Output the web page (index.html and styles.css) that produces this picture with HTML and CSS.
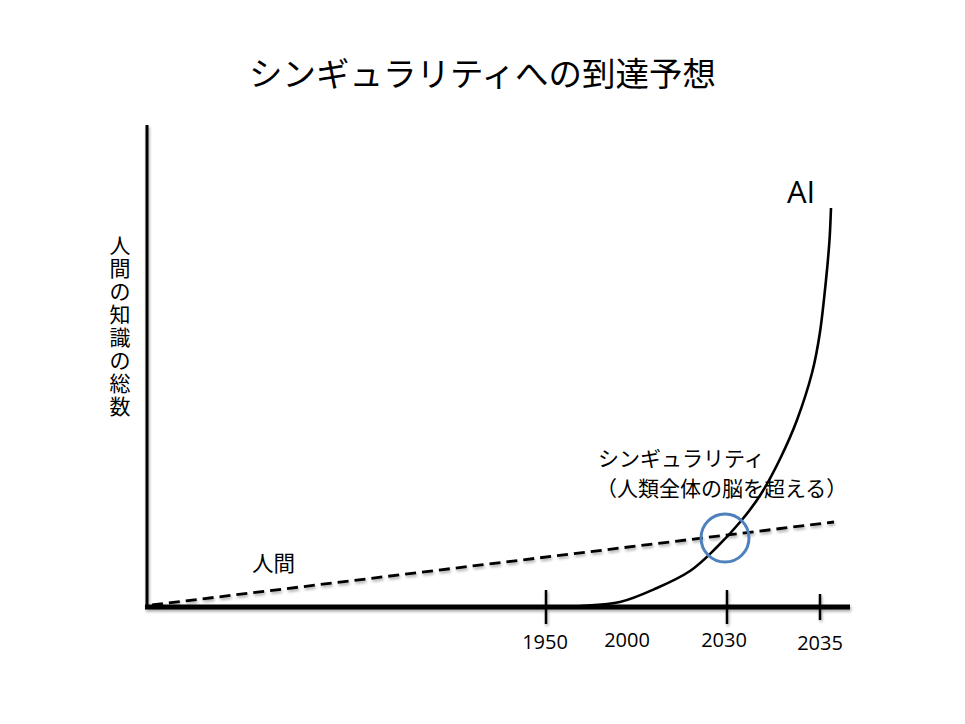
FILE: index.html
```html
<!DOCTYPE html>
<html lang="ja">
<head>
<meta charset="utf-8">
<title>シンギュラリティへの到達予想</title>
<link rel="stylesheet" href="styles.css">
</head>
<body>
<div class="slide">
  <h1 class="title">シンギュラリティへの到達予想</h1>
  <svg class="chart" viewBox="0 110 965 614" width="965" height="614" xmlns="http://www.w3.org/2000/svg">
    <defs>
      <filter id="shadow" x="-5%" y="-20%" width="110%" height="140%">
        <feGaussianBlur in="SourceAlpha" stdDeviation="1.5"/>
        <feOffset dx="1" dy="2" result="b"/>
        <feComponentTransfer><feFuncA type="linear" slope="0.35"/></feComponentTransfer>
        <feMerge><feMergeNode/><feMergeNode in="SourceGraphic"/></feMerge>
      </filter>
    </defs>
    <g class="axes" filter="url(#shadow)">
      <line class="axis-y" x1="147" y1="125" x2="147" y2="609"/>
      <line class="axis-x" x1="145" y1="607" x2="850" y2="607"/>
      <line class="tick" x1="546" y1="590" x2="546" y2="624"/>
      <line class="tick" x1="727" y1="590" x2="727" y2="624"/>
      <line class="tick" x1="820" y1="594" x2="820" y2="620"/>
    </g>
    <line class="human" filter="url(#shadow)" x1="152" y1="605" x2="834" y2="522"/>
    <path class="ai" d="M580 606 C586.67 605.33 607.17 605 620 602 C632.83 599 645.33 593.17 657 588 C668.67 582.83 680.17 577.67 690 571 C699.83 564.33 707.5 556.33 716 548 C724.5 539.67 733.5 530 741 521 C748.5 512 754.5 504.33 761 494 C767.5 483.67 774 471.33 780 459 C786 446.67 791.67 434.33 797 420 C802.33 405.67 808.17 387.67 812 373 C815.83 358.33 817.67 347.5 820 332 C822.33 316.5 824.42 295.33 826 280 C827.58 264.67 828.67 252 829.5 240 C830.33 228 830.75 213.33 831 208"/>
    <circle class="marker" cx="725" cy="538" r="24"/>
    <text class="year" x="545" y="649">1950</text>
    <text class="year" x="627" y="647">2000</text>
    <text class="year" x="724" y="647">2030</text>
    <text class="year" x="820" y="650">2035</text>
    <text class="ai-label" x="787" y="203">AI</text>
    <text class="jp human-label" x="252" y="571">人間</text>
    <text class="jp note" x="598" y="466">シンギュラリティ</text>
    <text class="jp note" x="596" y="496">（人類全体の脳を超える）</text>
    <g class="ylabel">
      <text class="jp ychar" x="120" y="253">人</text>
      <text class="jp ychar" x="120" y="276">間</text>
      <text class="jp ychar" x="120" y="299">の</text>
      <text class="jp ychar" x="120" y="322">知</text>
      <text class="jp ychar" x="120" y="345">識</text>
      <text class="jp ychar" x="120" y="368">の</text>
      <text class="jp ychar" x="120" y="391">総</text>
      <text class="jp ychar" x="120" y="414">数</text>
    </g>
  </svg>
</div>
</body>
</html>
```
FILE: styles.css
```css
html, body {
  margin: 0;
  padding: 0;
  background: #ffffff;
}

.slide {
  width: 965px;
  height: 724px;
  display: flex;
  flex-direction: column;
  overflow: hidden;
  background: #ffffff;
}

.title {
  margin: 0;
  padding-top: 50px;
  height: 60px;
  line-height: 44px;
  font-family: "Noto Sans CJK JP", "Noto Sans", sans-serif;
  font-weight: 400;
  font-size: 33.5px;
  text-align: center;
  color: #000000;
  letter-spacing: 0;
}

.chart {
  display: block;
  flex: none;
}

.axis-y {
  stroke: #000;
  stroke-width: 3;
}

.axis-x {
  stroke: #000;
  stroke-width: 5;
}

.tick {
  stroke: #000;
  stroke-width: 2.5;
}

.human {
  stroke: #000;
  stroke-width: 2.8;
  stroke-dasharray: 11 6;
}

.ai {
  fill: none;
  stroke: #000;
  stroke-width: 2.6;
}

.marker {
  fill: none;
  stroke: #4f81bd;
  stroke-width: 3;
}

.year {
  font-family: "Open Sans", "Liberation Sans", sans-serif;
  font-size: 20px;
  fill: #000;
  text-anchor: middle;
}

.ai-label {
  font-family: "Open Sans", "Liberation Sans", sans-serif;
  font-size: 31px;
  fill: #000;
}

.jp {
  font-family: "Noto Sans CJK JP", sans-serif;
  font-size: 20px;
  fill: #000;
}

.note {
  font-size: 21px;
}

.human-label {
  font-size: 21.5px;
}

.ychar {
  font-size: 21px;
  text-anchor: middle;
}
```
